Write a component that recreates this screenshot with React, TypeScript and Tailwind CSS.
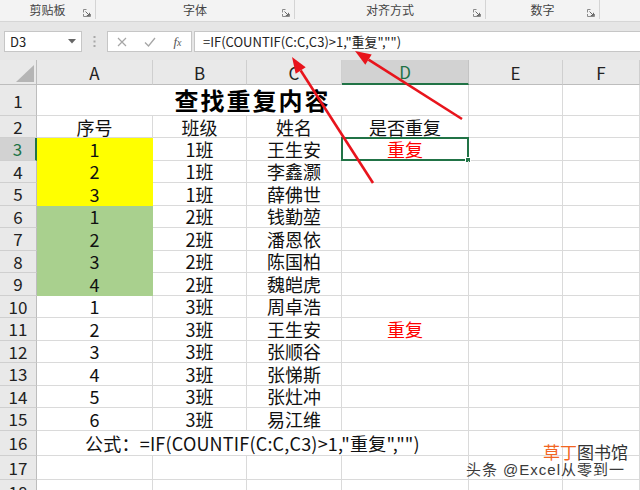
import React from "react";

const FONT = '"Noto Sans CJK SC", "Noto Sans", sans-serif';

type Row = { a: string; b: string; c: string; d?: string; fill?: string };

const rows: Row[] = [
  { a: "1", b: "1班", c: "王生安", d: "重复", fill: "bg-[#ffff00]" },
  { a: "2", b: "1班", c: "李鑫灏", fill: "bg-[#ffff00]" },
  { a: "3", b: "1班", c: "薛佛世", fill: "bg-[#ffff00]" },
  { a: "1", b: "2班", c: "钱勤堃", fill: "bg-[#a9d08e]" },
  { a: "2", b: "2班", c: "潘恩依", fill: "bg-[#a9d08e]" },
  { a: "3", b: "2班", c: "陈国柏", fill: "bg-[#a9d08e]" },
  { a: "4", b: "2班", c: "魏皑虎", fill: "bg-[#a9d08e]" },
  { a: "1", b: "3班", c: "周卓浩" },
  { a: "2", b: "3班", c: "王生安", d: "重复" },
  { a: "3", b: "3班", c: "张顺谷" },
  { a: "4", b: "3班", c: "张悌斯" },
  { a: "5", b: "3班", c: "张灶冲" },
  { a: "6", b: "3班", c: "易江维" },
];

function Launcher() {
  return (
    <svg width="8" height="8" viewBox="0 0 8 8" className="shrink-0">
      <path d="M0.5 3.5 V0.5 H3.5 M0.5 5 V7.5 H7.5 V5" stroke="#8a8a8a" strokeWidth="1" fill="none" />
      <path d="M2.5 2.5 L6.5 6.5 M6.5 3.8 V6.5 H3.8" stroke="#6a6a6a" strokeWidth="1" fill="none" />
    </svg>
  );
}

function Group({ w, label, last }: { w: string; label: string; last?: boolean }) {
  return (
    <div className={`${w} relative flex items-end justify-center pb-[3px] ${last ? "" : "border-r border-[#d4d4d4]"} mb-[2px]`}>
      <span className="text-[12px] leading-none text-[#444]">{label}</span>
      <div className="absolute right-[4px] bottom-[2px]">
        <Launcher />
      </div>
    </div>
  );
}

function RowHead({ n, active }: { n: number; active?: boolean }) {
  return (
    <div
      className={`flex items-center justify-center border-b border-[#cfcfcf] text-[17px] leading-none ${
        active
          ? "bg-[#d2d2d2] border-r-2 border-r-[#217346] text-[#217346]"
          : "bg-[#e9e9e9] border-r border-r-[#bdbdbd] text-[#222]"
      }`}
    >
      {n}
    </div>
  );
}

function Cell({
  children,
  fill,
  className = "",
}: {
  children?: React.ReactNode;
  fill?: string;
  className?: string;
}) {
  return (
    <div
      className={`flex items-center justify-center whitespace-nowrap border-r border-b text-[18px] leading-none text-[#111] ${
        fill ? `${fill} border-transparent` : "border-[#dadada]"
      } ${className}`}
    >
      {children}
    </div>
  );
}

export default function App() {
  const cols = ["A", "B", "C", "D", "E", "F"];
  return (
    <div className="relative w-[640px] h-[490px] overflow-hidden bg-white" style={{ fontFamily: FONT }}>
      {/* Ribbon */}
      <div className="h-[22px] flex bg-[#f3f3f3] border-b border-[#d6d6d6]">
        <Group w="w-[96px]" label="剪贴板" />
        <Group w="w-[199px]" label="字体" />
        <Group w="w-[191px]" label="对齐方式" />
        <Group w="w-[114px]" label="数字" />
        <div className="flex-1" />
      </div>

      {/* Formula bar band */}
      <div className="h-[38px] bg-[#e6e6e6] pt-[9px]">
        <div className="flex h-[21px]">
          <div className="ml-[4px] w-[78px] bg-white border border-[#c6c6c6] flex items-center justify-between pl-[5px] pr-[5px]">
            <span className="text-[13px] leading-none text-[#222]">D3</span>
            <svg width="8" height="5" viewBox="0 0 8 5">
              <path d="M0 0 H8 L4 4.5 Z" fill="#666" />
            </svg>
          </div>
          <div className="w-[25px] flex items-center justify-center">
            <svg width="3" height="11" viewBox="0 0 3 11">
              <rect x="0.5" y="0" width="2" height="2" fill="#a8a8a8" />
              <rect x="0.5" y="4.5" width="2" height="2" fill="#a8a8a8" />
              <rect x="0.5" y="9" width="2" height="2" fill="#a8a8a8" />
            </svg>
          </div>
          <div className="w-[85px] bg-white border border-[#c6c6c6] flex items-center">
            <div className="w-[28px] flex justify-center">
              <svg width="10" height="10" viewBox="0 0 10 10">
                <path d="M1 1 L9 9 M9 1 L1 9" stroke="#a6a6a6" strokeWidth="1.2" />
              </svg>
            </div>
            <div className="w-[28px] flex justify-center">
              <svg width="12" height="10" viewBox="0 0 12 10">
                <path d="M1 5.5 L4.5 9 L11 1" stroke="#a6a6a6" strokeWidth="1.3" fill="none" />
              </svg>
            </div>
            <div className="w-[27px] flex justify-center">
              <span
                className="text-[13px] italic leading-none text-[#555]"
                style={{ fontFamily: '"Liberation Serif", serif' }}
              >
                f<span className="text-[10px]">x</span>
              </span>
            </div>
          </div>
          <div className="ml-[2px] flex-1 bg-white border border-[#c6c6c6] border-r-0 flex items-center pl-[8px]">
            <span className="text-[13px] leading-none text-[#222]">=IF(COUNTIF(C:C,C3)&gt;1,"重复","")</span>
          </div>
        </div>
      </div>

      {/* Sheet grid */}
      <div className="grid grid-cols-[37px_116px_94px_95px_127px_94px_77px] grid-rows-[25px_31px_22px_repeat(13,22.5px)_25px_24px_24px]">
        {/* column header row */}
        <div className="relative bg-[#e9e9e9] border-r border-b border-[#bdbdbd]">
          <svg className="absolute left-0 top-0" width="37" height="25" viewBox="0 0 37 25">
            <polygon points="34,5 34,22 16,22" fill="#b5b5b5" />
          </svg>
        </div>
        {cols.map((c) => (
          <div
            key={c}
            className={`flex items-center justify-center text-[17px] leading-none ${
              c === "D"
                ? "bg-[#d2d2d2] border-b-2 border-b-[#217346] border-r border-r-[#c4c4c4] text-[#217346]"
                : "bg-[#e9e9e9] border-b border-b-[#bdbdbd] border-r border-r-[#cfcfcf] text-[#222]"
            }`}
          >
            {c}
          </div>
        ))}

        {/* row 1 */}
        <RowHead n={1} />
        <Cell className="col-span-4 text-[24px] font-bold tracking-[2px] text-black">查找重复内容</Cell>
        <Cell />
        <Cell />

        {/* row 2 */}
        <RowHead n={2} />
        <Cell>序号</Cell>
        <Cell>班级</Cell>
        <Cell>姓名</Cell>
        <Cell>是否重复</Cell>
        <Cell />
        <Cell />

        {rows.map((r, i) => (
          <React.Fragment key={i}>
            <RowHead n={i + 3} active={i === 0} />
            <Cell fill={r.fill}>{r.a}</Cell>
            <Cell>{r.b}</Cell>
            <Cell>{r.c}</Cell>
            <Cell className="relative">
              <span className="text-[#ff0000]">{r.d ?? ""}</span>
              {i === 0 && (
                <div className="absolute -left-px -top-px right-[-1px] bottom-[-1px] border-2 border-[#217346]">
                  <div className="absolute right-[-4px] bottom-[-4px] w-[6px] h-[6px] bg-[#217346] border border-white" />
                </div>
              )}
            </Cell>
            <Cell />
            <Cell />
          </React.Fragment>
        ))}

        {/* row 16 */}
        <RowHead n={16} />
        <Cell className="col-span-4 tracking-[0.2px]">公式：=IF(COUNTIF(C:C,C3)&gt;1,"重复","")</Cell>
        <Cell />
        <Cell />

        {/* row 17 */}
        <RowHead n={17} />
        <Cell />
        <Cell />
        <Cell />
        <Cell />
        <Cell />
        <Cell />

        {/* row 18 */}
        <RowHead n={18} />
        <Cell />
        <Cell />
        <Cell />
        <Cell />
        <Cell />
        <Cell />
      </div>

      {/* Red annotation arrows */}
      <svg className="absolute left-0 top-0 pointer-events-none" width="640" height="490" viewBox="0 0 640 490">
        <line x1="462" y1="119" x2="368.5" y2="59.6" stroke="#e8141c" strokeWidth="2.6" />
        <polygon points="355,51 371.7,54.5 365.3,64.7" fill="#e8141c" />
        <line x1="373" y1="183" x2="300.7" y2="70.5" stroke="#e8141c" strokeWidth="2.6" />
        <polygon points="292,57 305.7,67.2 295.7,73.7" fill="#e8141c" />
      </svg>

      {/* Watermark */}
      <div className="absolute left-[455px] top-[443px] w-[180px] flex flex-col items-end">
        <div className="text-[17px] leading-none pr-[7px] [text-shadow:0_0_2px_#fff]">
          <span className="text-[#f26522]">草丁</span>
          <span className="text-[#333]">图书馆</span>
        </div>
        <div
          className="mt-[2px] pr-[10px] text-[15px] tracking-[1px] leading-none text-[#3a3a3a] whitespace-nowrap [text-shadow:0_0_2px_#fff,0_0_1px_#fff]"
          style={{ fontFamily: '"Liberation Sans", "Noto Sans CJK SC", sans-serif' }}
        >
          头条 @Excel从零到一
        </div>
      </div>
    </div>
  );
}
